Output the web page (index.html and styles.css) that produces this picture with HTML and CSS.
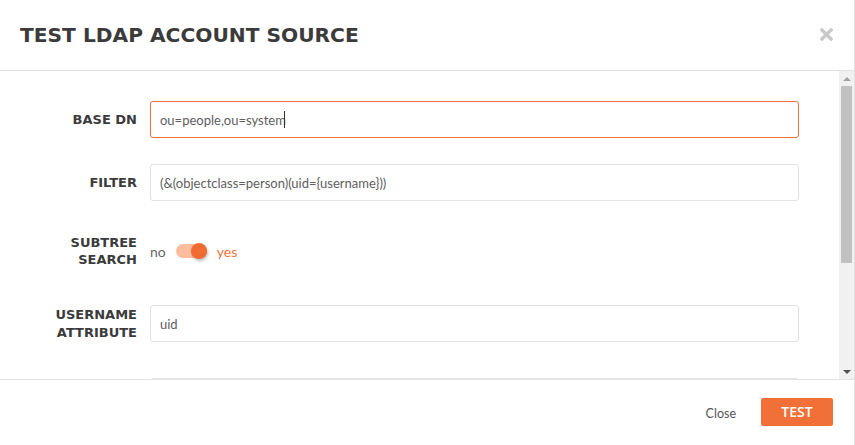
FILE: index.html
```html
<!DOCTYPE html>
<html>
<head>
  <meta charset="UTF-8" />
  <title>Test LDAP Account Source</title>
  <link rel="stylesheet" href="styles.css">
</head>
<body>
  <div class="modal">
    <div class="modal-header">
      <h1>TEST LDAP ACCOUNT SOURCE</h1>
      <span class="close-x">
        <svg width="13" height="13" viewBox="0 0 13 13">
          <path d="M2 2 L11 11 M11 2 L2 11" stroke="#c9c9c9" stroke-width="3.4" stroke-linecap="square" />
        </svg>
      </span>
    </div>

    <div class="modal-body">
      <form class="form">
        <div class="form-row">
          <label>BASE DN</label>
          <input type="text" class="focused" value="ou=people,ou=system" />
          <span class="caret"></span>
        </div>
        <div class="form-row">
          <label>FILTER</label>
          <input type="text" value="(&amp;(objectclass=person)(uid={username}))" />
        </div>
        <div class="form-row toggle-row">
          <label>SUBTREE<br>SEARCH</label>
          <div class="switch">
            <span class="off">no</span>
            <span class="track"><span class="knob"></span></span>
            <span class="on">yes</span>
          </div>
        </div>
        <div class="form-row tall">
          <label>USERNAME<br>ATTRIBUTE</label>
          <input type="text" value="uid" />
        </div>
        <div class="form-row">
          <label></label>
          <input type="text" value="" />
        </div>
      </form>

      <!-- scrollbar of the body -->
      <div class="scrollbar">
        <div class="arrow up"></div>
        <div class="thumb-track"><div class="thumb"></div></div>
        <div class="arrow down"></div>
      </div>
    </div>

    <div class="modal-footer">
      <button type="button" class="btn-link">Close</button>
      <button type="button" class="btn-primary">TEST</button>
    </div>
  </div>
</body>
</html>
```

FILE: styles.css
```css
body {
  margin: 0;
  background: #fff;
}

.modal {
  width: 854px;
  height: 445px;
  border-right: 1px solid #e2e2e2;
  display: flex;
  flex-direction: column;
  background: #fff;
}

.modal-header {
  height: 70px;
  border-bottom: 1px solid #e2e2e2;
  display: flex;
  align-items: center;
  justify-content: space-between;
  padding: 0 21px 0 20px;
}

h1 {
  margin: 0;
  font-family: "DejaVu Sans", sans-serif;
  font-weight: bold;
  font-size: 20.2px;
  color: #3b3b3b;
}

.close-x {
  display: flex;
  margin-top: -2px;
}

.modal-body {
  height: 308px;
  display: flex;
  overflow: hidden;
}

.form {
  flex: 1;
  padding: 30px 40px 0 0;
}

.form-row {
  display: grid;
  grid-template-columns: 137px 1fr;
  column-gap: 13px;
  align-items: center;
  height: 37px;
  margin-bottom: 26px;
  position: relative;
}

.form-row.toggle-row {
  height: 48px;
  margin-bottom: 30px;
}

.form-row.tall {
  margin-bottom: 36px;
}

label {
  text-align: right;
  font-family: "DejaVu Sans", sans-serif;
  font-weight: bold;
  font-size: 13px;
  line-height: 17.5px;
  color: #3b3b3b;
}

input[type="text"] {
  box-sizing: border-box;
  height: 37px;
  width: 100%;
  margin: 0;
  padding: 0 9px;
  border: 1px solid #e3e3e3;
  border-radius: 3px;
  font-family: Lato, sans-serif;
  font-size: 13px;
  color: #5e5e5e;
  outline: none;
}

input.focused {
  border-color: #f07038;
}

.caret {
  position: absolute;
  left: 284px;
  top: 10px;
  width: 1px;
  height: 17px;
  background: #333;
}

.switch {
  display: flex;
  align-items: center;
  font-family: Lato, sans-serif;
  font-size: 14px;
}

.off {
  color: #666;
  margin-right: 10px;
}

.on {
  color: #f07038;
  margin-left: 10px;
}

.track {
  width: 31px;
  height: 14px;
  border-radius: 7px;
  background: #fbbd9e;
  display: flex;
  align-items: center;
  justify-content: flex-end;
}

.knob {
  width: 16px;
  height: 16px;
  border-radius: 50%;
  background: #f06b32;
  box-shadow: 1px 2px 3px rgba(0, 0, 0, 0.25);
}

.scrollbar {
  width: 15px;
  background: #f1f1f1;
  display: flex;
  flex-direction: column;
}

.arrow {
  height: 15px;
  display: flex;
  align-items: center;
  justify-content: center;
}

.arrow::before {
  content: "";
  border-left: 4px solid transparent;
  border-right: 4px solid transparent;
}

.arrow.up::before {
  border-bottom: 4px solid #a3a3a3;
}

.arrow.down::before {
  border-top: 4px solid #505050;
}

.thumb-track {
  flex: 1;
}

.thumb {
  margin: 0 2px;
  height: 177px;
  background: #c1c1c1;
}

.modal-footer {
  flex: 1;
  border-top: 1px solid #e2e2e2;
  display: flex;
  align-items: center;
  justify-content: flex-end;
  padding: 0 21px 2px 0;
}

.btn-link {
  border: none;
  background: none;
  font-family: Lato, sans-serif;
  font-size: 12.5px;
  color: #555;
  padding: 0;
  margin-right: 25px;
  margin-top: 4px;
}

.btn-primary {
  width: 72px;
  height: 28px;
  border: none;
  border-radius: 2px;
  background: #f07038;
  color: #fff;
  font-family: "Open Sans", sans-serif;
  font-weight: 600;
  font-size: 14px;
  padding: 0;
}
```
